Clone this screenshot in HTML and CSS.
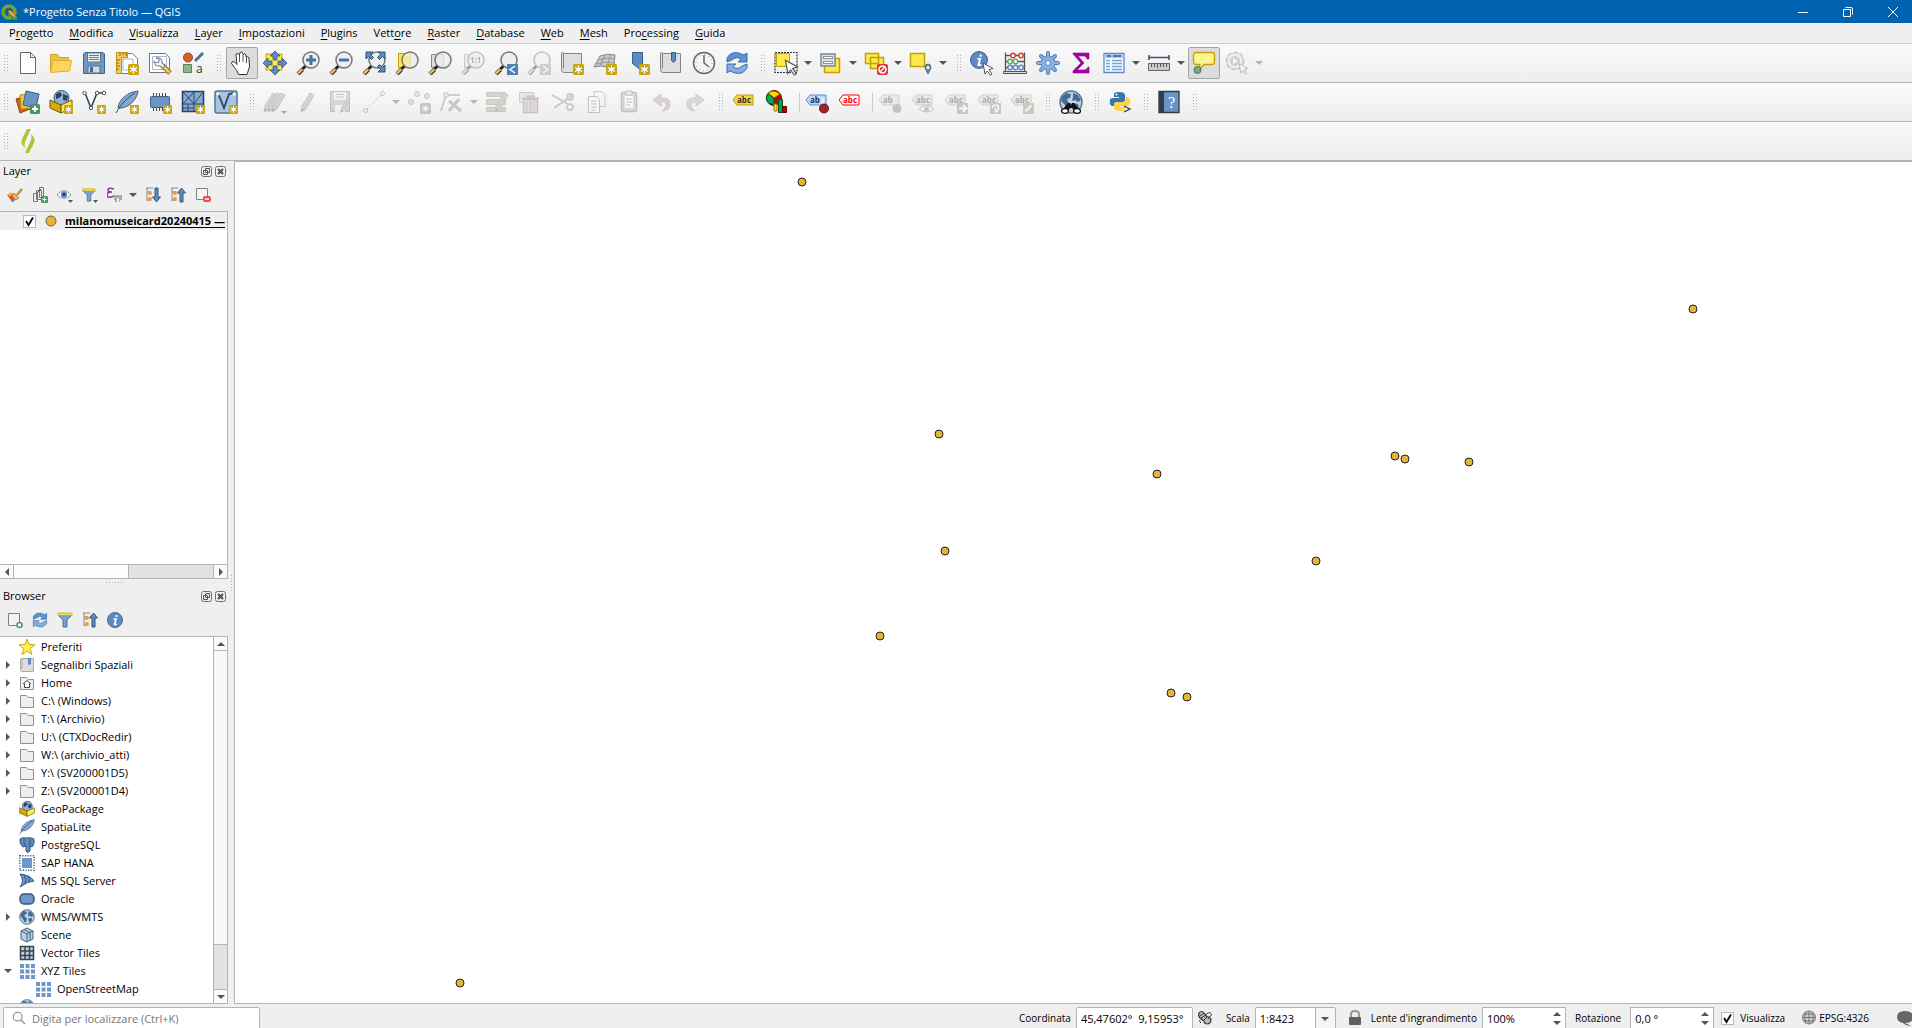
FILE: index.html
```html
<!DOCTYPE html>
<html lang="it">
<head>
<meta charset="utf-8">
<title>*Progetto Senza Titolo — QGIS</title>
<link rel="stylesheet" href="styles.css">
</head>
<body>
<svg class="sprite" aria-hidden="true">
  <symbol id="badge" viewBox="0 0 11 11"><rect width="11" height="11" rx="1.500" fill="#c9a512"/><path d="M5.500 1.500v8M2 3.500l7 4M9 3.500l-7 4" stroke="#fff" stroke-width="1.300"/><circle cx="5.500" cy="5.500" r="1.800" fill="#fff"/></symbol>
  <symbol id="pointer" viewBox="0 0 12 14"><path d="M1 1l10 5.500-4 1.300 3 4.200-1.700 1.200-3-4.200L3 12z" fill="#fff" stroke="#555"/></symbol>
  <symbol id="lens" viewBox="0 0 24 24"><path d="M2 23l4.500-4.500" stroke="#333" stroke-width="4"/><path d="M2 22.500l4-4" stroke="#f3c648" stroke-width="2.400"/><path d="M6.500 18l3.500-3.500" stroke="#222" stroke-width="3"/><circle cx="15" cy="9" r="8" fill="#eee" fill-opacity=".8" stroke="#777" stroke-width="1.500"/></symbol>
  <symbol id="pencil" viewBox="0 0 24 24"><path d="M5 22l1-6L14 3l4 2-8 14z" fill="#b5ad9f" stroke="#857c73"/><path d="M8 17l8-13" stroke="#958b82"/><path d="M5 22l1-4 3 2z" fill="#666"/></symbol>
  <symbol id="tag" viewBox="0 0 22 12"><path d="M1 6l4-5h16v10H5z"/></symbol>
  <symbol id="globe" viewBox="0 0 24 24"><circle cx="12" cy="12" r="11" fill="#bcd3ea" stroke="#5c7894" stroke-width="1.500"/><path d="M3 7l4-4 5 1-1 4-3 1 1 3 3 2-1 5-3 1-2-5-4-4zM14 3l5 2 3 5-3 2-3-2-3 1 1-4zM15 13l4 1 1 3-4 4-2-5z" fill="#466b91"/></symbol>
  <symbol id="folder" viewBox="0 0 16 16"><path d="M1.500 14.500v-12h6l2 2h5v10z" fill="#eee" stroke="#909090"/></symbol>
  <symbol id="box" viewBox="0 0 24 24"><circle cx="12.500" cy="8" r="7.500" fill="#8fb0d5" stroke="#35506e"/><path d="M7 4l4-2 2 3-3 3-3 1zM14 4l5 2-1 5-4-1z" fill="#29435f"/><path d="M1 10l11 5v8L1 18z" fill="#d6aa0a" stroke="#6f5909"/><path d="M23 10l-11 5v8l11-5z" fill="#fbe84d" stroke="#6f5909"/></symbol>
  <symbol id="feather" viewBox="0 0 24 24"><path d="M3 18C4 9 13 2 23 1c-1 8-8 16-17 17z" fill="#83a9d3" stroke="#42607f"/><path d="M1 23C6 14 12 8 20 3" fill="none" stroke="#2f4a68"/></symbol>
  <symbol id="refresh" viewBox="0 0 24 24"><path d="M2 11V7q4-7 12-5l5 2 3-2v9h-9l3-3q-5-3-9 1z" fill="#5b93d2" stroke="#3b6fa9"/><path d="M22 13v4q-4 7-12 5l-5-2-3 2v-9h9l-3 3q5 3 9-1z" fill="#7faee0" stroke="#3b6fa9"/></symbol>
  <symbol id="info" viewBox="0 0 16 16"><circle cx="8" cy="8" r="7.500" fill="#5b8ac4" stroke="#466c9b"/><path d="M9.500 3v2M6.500 7h2.500L7.500 12.500H10" fill="none" stroke="#fff" stroke-width="1.700"/></symbol>
  <symbol id="funnel" viewBox="0 0 16 16"><path d="M1 3h14L10 8v7H6V8z" fill="#7ba2cf" stroke="#4c719c"/><path d="M1 1h14v2.500H1z" fill="#fbe344" stroke="#c6a71b" stroke-width=".8"/></symbol>
  <symbol id="tree-up" viewBox="0 0 16 16"><path d="M1 1h7M2 1v13M2 5h3M2 13h3" stroke="#888"/><path d="M4 5h2v2H4zM4 11h2v2H4z" fill="#fff" stroke="#f0901e" stroke-width="1.300"/><path d="M11.500 1l4 5h-2.500v9h-3V6H7.500z" fill="#5b8ac4" stroke="#345779"/></symbol>
  <symbol id="tree-down" viewBox="0 0 16 16"><path d="M1 1h7M2 1v13M2 5h3M2 13h3" stroke="#888"/><path d="M4 5h2v2H4zM4 11h2v2H4z" fill="#fff" stroke="#f0901e" stroke-width="1.300"/><path d="M11.500 15l4-5h-2.500V1h-3v9H7.500z" fill="#5b8ac4" stroke="#345779"/></symbol>
  <symbol id="dots" viewBox="0 0 16 16"><path d="M1 1h4v4H1zM6.500 1h4v4h-4zM12 1h4v4h-4zM1 6.500h4v4H1zM6.500 6.500h4v4h-4zM12 6.500h4v4h-4zM1 12h4v4H1zM6.500 12h4v4h-4zM12 12h4v4h-4z" fill="#6c97c9"/></symbol>
  <symbol id="float" viewBox="0 0 11 11"><rect x=".5" y=".5" width="10" height="10" rx="2" fill="none" stroke="#707070"/><path d="M4.500 2.500h4v4h-4zM2.500 4.500h4v4h-4z" fill="#efefef" stroke="#555"/></symbol>
  <symbol id="close" viewBox="0 0 11 11"><rect x=".5" y=".5" width="10" height="10" rx="2" fill="none" stroke="#707070"/><path d="M3 3l5 5M8 3L3 8" stroke="#505050" stroke-width="2"/></symbol>
</svg>

<header class="titlebar">
  <svg class="logo" viewBox="0 0 16 16"><circle cx="8" cy="8" r="6" fill="none" stroke="#78a22f" stroke-width="3.600"/><path d="M8 8l3-1 5 6v3h-3L7 11z" fill="#589632"/><path d="M7 6l4 1 3 4-2 1-4-2z" fill="#ee7913"/><path d="M8 7l6 6" stroke="#f4d488"/></svg>
  <h1>*Progetto Senza Titolo — QGIS</h1>
  <div class="window-buttons">
    <button aria-label="Riduci"><svg viewBox="0 0 10 10"><path d="M0 5.500h10"/></svg></button>
    <button aria-label="Ripristina"><svg viewBox="0 0 10 10"><path d="M.5 2.500h7v7h-7zM2.500 .5h5.500q1.500 0 1.500 1.500v5.500" fill="none"/></svg></button>
    <button aria-label="Chiudi"><svg viewBox="0 0 10 10"><path d="M0 0l10 10M10 0L0 10"/></svg></button>
  </div>
</header>

<nav class="menubar">
  <button>P<u>r</u>ogetto</button><button><u>M</u>odifica</button><button><u>V</u>isualizza</button><button><u>L</u>ayer</button><button><u>I</u>mpostazioni</button><button><u>P</u>lugins</button><button>Vett<u>o</u>re</button><button><u>R</u>aster</button><button><u>D</u>atabase</button><button><u>W</u>eb</button><button><u>M</u>esh</button><button>Pro<u>c</u>essing</button><button><u>G</u>uida</button>
</nav>

<div class="toolbar">
  <div class="group"><i class="grip"></i>
    <button aria-label="Nuovo"><svg viewBox="0 0 24 24"><path d="M4.500 1.500h10l5 5v16h-15zM14.500 1.500v5h5" fill="#fff" stroke="#666"/></svg></button>
    <button aria-label="Apri"><svg viewBox="0 0 24 24"><path d="M1.500 21V3.500h7l2 3h9V10" fill="#eec04a" stroke="#d19f24"/><path d="M1.500 21.500L4 9.500h18.500L20.500 20z" fill="#fcd660" stroke="#dfae31"/></svg></button>
    <button aria-label="Salva"><svg viewBox="0 0 24 24"><path d="M3 1.500h18l1.500 1.500v19.500h-21V3z" fill="#6f97c5" stroke="#40658f"/><path d="M5.500 2h13v9h-13z" fill="#f1f1f1" stroke="#55789f"/><path d="M7 4.500h10M7 6.500h10M7 8.500h10" stroke="#777"/><path d="M6 15h12v7H6z" fill="#d8d8d8" stroke="#4c6c90"/><path d="M8 16h3v5H8z" fill="#456c98"/></svg></button>
    <button aria-label="Nuovo layout"><svg viewBox="0 0 24 24"><path d="M5.500 2.500h12l5 5v15h-17z" fill="#fff" stroke="#777"/><path d="M8 8h10v11H8z" fill="#fff" stroke="#9db7e0"/><path d="M1.500 1.500h11v5h-6v16h-5z" fill="#f5cc55" stroke="#bd901b"/><path d="M5 2v3M8 2v2M11 2v3M2 9h3M2 12h2M2 15h3M2 18h2" stroke="#7c6018"/><use href="#badge" x="13" y="13" width="11" height="11"/></svg></button>
    <button aria-label="Gestore layout"><svg viewBox="0 0 24 24"><path d="M1.500 2.500h16l4 4v15h-20z" fill="#fff" stroke="#777"/><path d="M4.500 5.500h14v13h-14z" fill="#fff" stroke="#9db7e0"/><path d="M14 14l8 8" stroke="#8b6b20" stroke-width="5"/><path d="M14.500 14.500l7 7" stroke="#e8c766" stroke-width="3"/><path d="M8 7l3 1v3l-3 1-2-2q0 6 6 5l3 2 2-2-3-3q1-6-6-5z" fill="#eee" stroke="#777"/></svg></button>
    <button aria-label="Gestore stili"><svg viewBox="0 0 24 24"><circle cx="7" cy="6.500" r="4.500" fill="#d3622c" stroke="#9b4419"/><path d="M14 10l8-8" stroke="#4c6f96" stroke-width="3"/><path d="M2.500 13.500h8v8h-8z" fill="#8db58b" stroke="#5b8159"/><text x="15" y="22" font-size="12" fill="#333">a</text></svg></button>
  </div>
  <div class="group"><i class="grip"></i>
    <button class="on" aria-label="Sposta mappa"><svg viewBox="0 0 24 24"><path d="M8.500 23.500q-1-4-4-7l-3-4q0-2 2-2 2 .5 3.500 3L6 4q.5-2 2-1.500L9.500 4 10 1.500q1.500-1 2.500 0l.5 2q1.500-1.500 3 .5v2q2-1 3 1l.5 9-2.500 7.500z" fill="#fff" stroke="#333"/><path d="M9.500 4v7M13 4v7M16.500 6v6" stroke="#555"/></svg></button>
    <button aria-label="Centra sulla selezione"><svg viewBox="0 0 24 24"><path d="M3 3h16v16H3z" fill="#fce94f" stroke="#c4a000"/><path d="M12 0l5 5h-3v4h-4V5H7zM12 24l5-5h-3v-4h-4v4H7zM0 12l5-5v3h4v4H5v3zM24 12l-5-5v3h-4v4h4v3z" fill="#5b8ac4" stroke="#335575" stroke-width=".8"/></svg></button>
    <button aria-label="Ingrandisci"><svg viewBox="0 0 24 24"><use href="#lens"/><path d="M15 4v10M10 9h10" stroke="#4373ab" stroke-width="3"/></svg></button>
    <button aria-label="Rimpicciolisci"><svg viewBox="0 0 24 24"><use href="#lens"/><path d="M10 9h10" stroke="#4373ab" stroke-width="3"/></svg></button>
    <button aria-label="Zoom completo"><svg viewBox="0 0 24 24"><use href="#lens"/><path d="M4 1h7L8.500 3.500l3 3-2 2-3-3L4 8zM23 1v7l-2.500-2.500-3 3-2-2 3-3L16 1zM23 21h-7l2.500-2.500-3-3 2-2 3 3L23 14z" fill="#5b8ac4" stroke="#335575"/></svg></button>
    <button aria-label="Zoom selezione"><svg viewBox="0 0 24 24"><path d="M3.500 2.500h12v14h-12z" fill="#fce94f" stroke="#c4a000"/><use href="#lens"/><path d="M9 5h6v10q-6-1-6-6z" fill="#fce94f" opacity=".4"/></svg></button>
    <button aria-label="Zoom layer"><svg viewBox="0 0 24 24"><path d="M3.500 3.500h12v13h-12z" fill="#ddd" stroke="#888"/><use href="#lens"/></svg></button>
    <button disabled aria-label="Risoluzione nativa"><svg viewBox="0 0 24 24"><path d="M3.500 3.500h12v13h-12z" fill="#ddd" stroke="#888"/><use href="#lens"/><text x="9" y="12" font-size="8" font-weight="700" fill="#555">1:1</text></svg></button>
    <button aria-label="Zoom precedente"><svg viewBox="0 0 24 24"><use href="#lens"/><path d="M13 13h11v11H13z" fill="#4f7fb8"/><path d="M21 15l-5 3.500 5 3.500" fill="none" stroke="#fff" stroke-width="1.500"/></svg></button>
    <button disabled aria-label="Zoom successivo"><svg viewBox="0 0 24 24"><use href="#lens"/><path d="M13 13h11v11H13z" fill="#999"/><path d="M16 15l5 3.500-5 3.500" fill="none" stroke="#fff" stroke-width="1.500"/></svg></button>
    <button aria-label="Nuova vista mappa"><svg viewBox="0 0 24 24"><path d="M3.500 2.500h18v19H4q-2.500 0-2.500-3v-16q0-1 1-1t1 1v15" fill="#dedede" stroke="#858585"/><use href="#badge" x="13" y="13" width="11" height="11"/></svg></button>
    <button aria-label="Nuova vista 3D"><svg viewBox="0 0 24 24"><path d="M1 16L7 5q8-3 15-1l-1 11-7 1q-6-2-13 0z" fill="#c9c9c9" stroke="#888"/><path d="M5 9q8-3 17-1M3 13q9-3 19-1M12 4L7 15M17 4l-3 12" fill="none" stroke="#999"/><use href="#badge" x="13" y="13" width="11" height="11"/></svg></button>
    <button aria-label="Nuovo segnalibro"><svg viewBox="0 0 24 24"><path d="M6.500 1.500h10v20l-5-5-5-4z" fill="#5b8ac4" stroke="#395b82"/><use href="#badge" x="13" y="13" width="11" height="11"/></svg></button>
    <button aria-label="Segnalibri"><svg viewBox="0 0 24 24"><path d="M3.500 2.500h18v19H4q-2.500 0-2.500-3v-16q0-1 1-1t1 1v15" fill="#dedede" stroke="#858585"/><path d="M12.500 1.500h4v8l-2 2-2-2z" fill="#5b8ac4" stroke="#395b82"/></svg></button>
    <button aria-label="Controllo temporale"><svg viewBox="0 0 24 24"><circle cx="12" cy="12" r="10.500" fill="#f5f5f5" stroke="#666" stroke-width="1.500"/><circle cx="12" cy="12" r="8" fill="none" stroke="#6792c4" stroke-dasharray="1 3.200"/><path d="M12 4v8l5 4" fill="none" stroke="#666" stroke-width="1.500"/></svg></button>
    <button aria-label="Aggiorna"><svg><use href="#refresh"/></svg></button>
  </div>
  <div class="group"><i class="grip"></i>
    <button class="menu" aria-label="Seleziona elementi"><svg viewBox="0 0 24 24"><path d="M1 1.500h22v20H1z" fill="none" stroke="#333" stroke-width="1.200" stroke-dasharray="2 1"/><path d="M2.500 2.500h13v13h-13z" fill="#fce94f" stroke="#c4a000"/><use href="#pointer" x="10" y="8" width="15" height="17"/></svg></button>
    <button class="menu" aria-label="Seleziona per valore"><svg viewBox="0 0 24 24"><path d="M5.500 7.500h15v14h-15z" fill="#fce94f" stroke="#c4a000" stroke-width="1.500"/><path d="M2 3h14v12H2z" fill="#dfe2e6" stroke="#7e8790" stroke-width="1.500"/><path d="M4 6.500h10M4 11.500h10" stroke="#8893a2" stroke-width="3"/><path d="M5 6.500h8M5 11.500h8" stroke="#fff"/></svg></button>
    <button class="menu" aria-label="Deseleziona"><svg viewBox="0 0 24 24"><path d="M1.500 2.500h13v10h-13zM6.500 6.500h13v11h-13z" fill="#fce94f" stroke="#c4a000" stroke-width="1.500"/><rect x="13" y="13" width="11" height="11" rx="2" fill="#d9383d"/><circle cx="18.500" cy="18.500" r="3.500" fill="none" stroke="#fff" stroke-width="1.500"/><path d="M16 21l5-5" stroke="#fff" stroke-width="1.500"/></svg></button>
    <button class="menu" aria-label="Seleziona per posizione"><svg viewBox="0 0 24 24"><path d="M1.500 2.500h14v13h-14z" fill="#fce94f" stroke="#c4a000" stroke-width="1.500"/><path d="M19 23l-3-6q0-4 3-4t3 4z" fill="#6b8ba3" stroke="#48687e"/><circle cx="19" cy="16.500" r="1.500" fill="#fff"/></svg></button>
  </div>
  <div class="group"><i class="grip"></i>
    <button aria-label="Informazioni elementi"><svg viewBox="0 0 24 24"><use href="#info" width="18" height="18"/><use href="#pointer" x="12" y="11" width="12" height="14"/></svg></button>
    <button aria-label="Calcolatore di campi"><svg viewBox="0 0 24 24"><path d="M2.500 1.500v19M21.500 1.500v19M2 4.500h20M2 10.500h20M2 16.500h20" stroke="#555" stroke-width="1.300"/><path d="M.5 20.500h23v2H.5z" fill="#ddd" stroke="#555"/><g fill="#fff" stroke-width="1.400"><g stroke="#d53b3b"><circle cx="10" cy="4.500" r="2.200"/><circle cx="18" cy="4.500" r="2.200"/></g><g stroke="#55b455"><circle cx="7" cy="10.500" r="2.200"/><circle cx="12.500" cy="10.500" r="2.200"/></g><g stroke="#5388c4"><circle cx="7" cy="16.500" r="2.200"/><circle cx="12.500" cy="16.500" r="2.200"/><circle cx="18" cy="16.500" r="2.200"/></g></g></svg></button>
    <button aria-label="Strumenti di Processing"><svg viewBox="0 0 24 24"><path d="M12 2v20M2 12h20M5 5l14 14M19 5L5 19" stroke="#4d80c0" stroke-width="4" stroke-linecap="round"/><circle cx="12" cy="12" r="7" fill="#8cb0de" stroke="#4d80c0"/><path d="M12 2v20M2 12h20M5 5l14 14M19 5L5 19" stroke="#8cb0de" stroke-width="2" stroke-linecap="round"/><circle cx="12" cy="12" r="2.500" fill="#fff" stroke="#4d80c0"/></svg></button>
    <button aria-label="Riepilogo statistico"><svg viewBox="0 0 24 24"><path d="M4 2h16v6h-2q-.5-3-3-3H9l6 7-7 7h7q3 0 4-3h1v6H4v-2l8-8-8-9z" fill="#a800a8" stroke="#840084" stroke-width=".6"/></svg></button>
    <button class="menu" aria-label="Tabella attributi"><svg viewBox="0 0 24 24"><path d="M2 2.500h20v19H2z" fill="#f7fbff" stroke="#5b8ac4" stroke-width="1.300"/><path d="M2.500 3h19v4h-19z" fill="#a9c8ea"/><path d="M5 5h4M11 5h8" stroke="#4c79ae" stroke-width="2"/><path d="M4 9.500h4M10 9.500h10M4 12.500h4M10 12.500h10M4 15.500h4M10 15.500h10M4 18.500h4M10 18.500h10" stroke="#7aa1cf" stroke-width="1.300"/></svg></button>
    <button class="menu" aria-label="Misura linea"><svg viewBox="0 0 24 24"><path d="M2 6.500h20M2 4v5M22 4v5" stroke="#34597f" stroke-width="1.600"/><path d="M1.500 12.500h21v7h-21z" fill="#ccc" stroke="#666"/><path d="M4.500 13v3M7.500 13v3M10.500 13v4M13.500 13v3M16.500 13v3M19.500 13v3" stroke="#555"/></svg></button>
    <button class="on" aria-label="Suggerimenti mappa"><svg viewBox="0 0 24 24"><path d="M5 1.500h15q2.500 0 2.500 2.500v7q0 2.500-2.500 2.500h-8l-5 6 1-6H4q-2.500 0-2.500-2.500V4q0-2.500 2.500-2.500z" fill="#fdf48f" stroke="#c4a000" stroke-width="1.300"/><circle cx="5.500" cy="19" r="3.500" fill="#7eac80" stroke="#4f7352"/></svg></button>
    <button class="menu" disabled aria-label="Esegui azione"><svg viewBox="0 0 24 24"><circle cx="10" cy="10" r="8" fill="#ddd" stroke="#888" stroke-width="3" stroke-dasharray="4 2"/><circle cx="10" cy="10" r="8" fill="#e8e8e8" stroke="#999"/><circle cx="10" cy="10" r="5" fill="#999"/><path d="M8 7l5 3-5 3z" fill="#fff"/><use href="#pointer" x="13" y="12" width="11" height="12"/></svg></button>
  </div>
</div>

<div class="toolbar">
  <div class="group"><i class="grip"></i>
    <button aria-label="Gestore sorgenti dati"><svg viewBox="0 0 24 24"><path d="M0 9l10-3 4 13-10 4z" fill="#d65a25" stroke="#9b3f16"/><path d="M4 5l11-1 1 14-11 1z" fill="#f2ca35" stroke="#b28a0d"/><path d="M10 1l13 3-3 14-13-3z" fill="#6b94c4" stroke="#3d618b"/><rect x="14" y="14" width="10" height="10" rx="1.500" fill="#4f9164"/><path d="M19 16v6M16 19h6" stroke="#fff" stroke-width="1.800"/></svg></button>
    <button aria-label="Nuovo GeoPackage"><svg viewBox="0 0 24 24"><use href="#box"/><use href="#badge" x="15" y="15" width="9" height="9"/></svg></button>
    <button aria-label="Nuovo shapefile"><svg viewBox="0 0 24 24"><path d="M3 3l6 15 6-15h7" fill="none" stroke="#34495f" stroke-width="1.600"/><g fill="#fff" stroke="#555"><circle cx="2.500" cy="3" r="1.700"/><circle cx="9" cy="18" r="1.700"/><circle cx="15" cy="3" r="1.700"/><circle cx="22" cy="3" r="1.700"/></g><use href="#badge" x="15" y="15" width="9" height="9"/></svg></button>
    <button aria-label="Nuovo SpatiaLite"><svg viewBox="0 0 24 24"><use href="#feather"/><use href="#badge" x="15" y="15" width="9" height="9"/></svg></button>
    <button aria-label="Nuovo layer temporaneo"><svg viewBox="0 0 24 24"><path d="M5.500 3v18M8.500 3v18M11.500 3v18M14.500 3v18M17.500 3v18" stroke="#444"/><rect x="2.500" y="6.500" width="19" height="11" rx="1" fill="#6b94c4" stroke="#3d618b"/><use href="#badge" x="15" y="15" width="9" height="9"/></svg></button>
    <button aria-label="Nuova mesh"><svg viewBox="0 0 24 24"><path d="M1.500 1.500h21v20h-21z" fill="#83a9d3" stroke="#2c4562" stroke-width="1.600"/><path d="M1.500 14h21M13 1.500v20M2 2l11 12M2 14L13 2M13 14l9-12M2 18h11M7 14v8" fill="none" stroke="#2c4562"/><use href="#badge" x="15" y="15" width="9" height="9"/></svg></button>
    <button aria-label="Nuovo layer GPX"><svg viewBox="0 0 24 24"><rect x="1" y="1" width="22" height="22" rx="2" fill="#a9c4e2" stroke="#577390" stroke-width="1.500"/><path d="M4 3l6 15 5-14 5-1" fill="none" stroke="#2c4562" stroke-width="1.800"/><circle cx="4" cy="4" r="1.500" fill="#fff"/><circle cx="20" cy="4" r="1.500" fill="#fff"/><use href="#badge" x="15" y="15" width="9" height="9"/></svg></button>
  </div>
  <div class="group"><i class="grip"></i>
    <button disabled aria-label="Modifiche in corso"><svg viewBox="0 0 24 24"><use href="#pencil" x="-4"/><use href="#pencil"/><use href="#pencil" x="4"/><path d="M18 21h6l-3 3z" fill="#333"/></svg></button>
    <button disabled aria-label="Attiva modifica"><svg><use href="#pencil"/></svg></button>
    <button disabled aria-label="Salva modifiche"><svg viewBox="0 0 24 24"><path d="M1.500 1.500h19v20h-19z" fill="#aaa" stroke="#777"/><path d="M5 2h12v8H5zM6 15h10v7H6z" fill="#eee"/><path d="M7 4.500h8M7 7h8" stroke="#888"/><use href="#pencil" x="8" y="7" width="17" height="17"/></svg></button>
    <button class="menu" disabled aria-label="Digitalizza"><svg viewBox="0 0 24 24"><path d="M4 20L20 4" stroke="#888" stroke-dasharray="3 1.500"/><g fill="#eee" stroke="#777"><circle cx="3.500" cy="20.500" r="2"/><circle cx="20.500" cy="3.500" r="2"/></g></svg></button>
    <button disabled aria-label="Aggiungi punto"><svg viewBox="0 0 24 24"><g fill="#ccc" stroke="#777"><circle cx="4" cy="12" r="2.500"/><circle cx="10" cy="4" r="2.500"/><circle cx="20" cy="6" r="2.500"/></g><rect x="13" y="13" width="11" height="11" rx="1.500" fill="#8b8468"/><path d="M18.500 15v7M15 18.500h7M16 16l5 5M21 16l-5 5" stroke="#fff"/></svg></button>
    <button class="menu" disabled aria-label="Strumento vertici"><svg viewBox="0 0 24 24"><path d="M1 21L6 5h14" fill="none" stroke="#777" stroke-width="1.500"/><path d="M4 3h4v4H4z" fill="#eee" stroke="#777"/><path d="M9 11l12 10M19 9L9 21" stroke="#888" stroke-width="3"/></svg></button>
    <button disabled aria-label="Modifica attributi"><svg viewBox="0 0 24 24"><path d="M1.500 2.500h19v4h-19zM1.500 9.500h19v5h-19zM1.500 17.500h19v4h-19z" fill="#a9a98c" stroke="#8a8a77"/><use href="#pencil" x="5"/></svg></button>
    <button disabled aria-label="Elimina"><svg viewBox="0 0 24 24"><path d="M1.500 2.500h14v10h-14z" fill="#d8d4b4" stroke="#98907b"/><path d="M5.500 9.500h14v13h-14zM4 8h17M9 8V6h7v2" fill="#d0b5b5" stroke="#977a7a" stroke-width="1.400"/><path d="M9 12v8M12.500 12v8M16 12v8" stroke="#977a7a"/></svg></button>
    <button disabled aria-label="Taglia"><svg viewBox="0 0 24 24"><path d="M1 5l16 9M3 18L22 5" stroke="#888" stroke-width="2"/><circle cx="19" cy="17" r="3" fill="none" stroke="#a88" stroke-width="1.800"/><circle cx="19" cy="7" r="3" fill="none" stroke="#a88" stroke-width="1.800"/></svg></button>
    <button disabled aria-label="Copia"><svg viewBox="0 0 24 24"><path d="M10 1.500h8l3 3v12h-11z" fill="#f4f4f4" stroke="#888"/><path d="M4.500 6.500h8l3 3v13h-11zM7 11h6M7 14h6M7 17h6M7 20h4" fill="#fff" stroke="#777"/></svg></button>
    <button disabled aria-label="Incolla"><svg viewBox="0 0 24 24"><rect x="4.500" y="2.500" width="15" height="19" rx="1.500" fill="#c0c0b8" stroke="#777" stroke-width="1.500"/><path d="M7 5h10v14H7z" fill="#fff" stroke="#888"/><path d="M9 1h6v4H9zM9 9h6M9 12h6M9 15h4" fill="#ddd" stroke="#777"/></svg></button>
    <button disabled aria-label="Annulla"><svg viewBox="0 0 24 24"><path d="M11 4L3 10l8 6v-4q6-1 5 4-1 3-4 5 9-1 8-8-1-6-9-5z" fill="#b5a094" stroke="#9c8a80"/></svg></button>
    <button disabled aria-label="Ripristina modifica"><svg viewBox="0 0 24 24"><path d="M13 4l8 6-8 6v-4q-6-1-5 4 1 3 4 5-9-1-8-8 1-6 9-5z" fill="#a9b5a6" stroke="#818d7e"/></svg></button>
  </div>
  <div class="group"><i class="grip"></i>
    <button aria-label="Etichette layer"><svg class="yellow" viewBox="0 0 24 24"><use href="#tag" y="4" width="22" height="12"/><text x="5" y="13">abc</text></svg></button>
    <button aria-label="Diagrammi layer"><svg viewBox="0 0 24 24"><circle cx="9" cy="8" r="7.500" fill="#c00000" stroke="#640000"/><path d="M9 8L3 3.500Q8-1.500 15 4z" fill="#ffd700" stroke="#8a6d00"/><path d="M9 8L3 3.500Q-1 9 4 13.500l5 1z" fill="#00a651" stroke="#00532a"/><path d="M9 14h3v7H9z" fill="#ffd23c" stroke="#a67a00"/><path d="M13.500 9.500h4v13h-4z" fill="#00a651" stroke="#00532a"/><path d="M17.500 16.500h4v6h-4z" fill="#c00000" stroke="#640000"/></svg></button>
    <i class="rule"></i>
    <button aria-label="Fissa etichette"><svg class="blue" viewBox="0 0 24 24"><use href="#tag" y="4" width="22" height="12"/><text x="5" y="13">ab</text><path d="M18 8v9" stroke="#eee" stroke-width="3"/><circle cx="19" cy="18.500" r="4.500" fill="#a81f24" stroke="#6f1115"/></svg></button>
    <button aria-label="Etichette non posizionate"><svg class="red" viewBox="0 0 24 24"><use href="#tag" y="4" width="22" height="12"/><text x="5" y="13">abc</text></svg></button>
    <i class="rule"></i>
    <button disabled aria-label="Fissa"><svg class="gray" viewBox="0 0 24 24"><use href="#tag" y="4" width="22" height="12"/><text x="5" y="13">ab</text><path d="M18 8v9" stroke="#ddd" stroke-width="3"/><circle cx="19" cy="18.500" r="4.500" fill="#977"/></svg></button>
    <button disabled aria-label="Mostra o nascondi"><svg class="gray" viewBox="0 0 24 24"><use href="#tag" y="4" width="22" height="12"/><text x="5" y="13">abc</text><path d="M8 19q7-7 15 0-7 6-15 0z" fill="#fff" stroke="#777"/><circle cx="15.500" cy="19" r="2.500" fill="#888"/></svg></button>
    <button disabled aria-label="Sposta etichetta"><svg class="gray" viewBox="0 0 24 24"><use href="#tag" y="4" width="22" height="12"/><text x="5" y="13">abc</text><path d="M13 13h11v11H13z" fill="#888"/><path d="M15 18.500h7M19 15l3.500 3.500L19 22" fill="none" stroke="#fff" stroke-width="2"/></svg></button>
    <button disabled aria-label="Ruota etichetta"><svg class="gray" viewBox="0 0 24 24"><use href="#tag" y="4" width="22" height="12"/><text x="5" y="13">abc</text><path d="M13 13h11v11H13z" fill="#888"/><path d="M15.500 18q0-3 3-3t3 3-3 4v-4" fill="none" stroke="#fff" stroke-width="1.500"/></svg></button>
    <button disabled aria-label="Modifica etichetta"><svg class="gray" viewBox="0 0 24 24"><use href="#tag" y="4" width="22" height="12"/><text x="5" y="13">abc</text><path d="M13 13h11v11H13z" fill="#968f70"/><path d="M15.500 21.500l6-6" stroke="#fff" stroke-width="2"/></svg></button>
  </div>
  <div class="group"><i class="grip"></i>
    <button aria-label="MetaSearch"><svg viewBox="0 0 24 24"><use href="#globe"/><path d="M4 19l5-6h2l1 2 1-2h2l5 6-4 2-3-3h-2l-3 3z" fill="#111"/><ellipse cx="6" cy="21" rx="3.500" ry="2.300" fill="#fff" stroke="#111" stroke-width="1.300"/><ellipse cx="18" cy="21" rx="3.500" ry="2.300" fill="#fff" stroke="#111" stroke-width="1.300"/></svg></button>
  </div>
  <div class="group"><i class="grip"></i>
    <button aria-label="Console Python"><svg viewBox="0 0 24 24"><path d="M11 2q6 0 6 3v5q0 2-3 2H9q-3 0-3 4H4q-3-1-2-6 0-2 3-2h6V7H6V4q0-2 5-2z" fill="#3a76a8"/><path d="M12 21q-6 0-6-3v-4q0-2 3-2h5q4 0 4-5h2q3 1 2 6 0 3-4 3h-6v1h5v2q0 2-5 2z" fill="#ffd343"/><circle cx="8.500" cy="4.500" r="1" fill="#fff"/><path d="M16 16l6 3-6 3" fill="none" stroke="#333" stroke-width="1.300"/></svg></button>
  </div>
  <div class="group"><i class="grip"></i>
    <button aria-label="Guida in linea"><svg viewBox="0 0 24 24"><path d="M2 1.500h20v21H2z" fill="#6b94c4" stroke="#2d3a47" stroke-width="1.300"/><path d="M2 2h5v20H2z" fill="#2c3e50"/><text class="serif" x="11" y="18" font-size="16" fill="#fff">?</text></svg></button>
  </div>
  <div class="group"><i class="grip"></i></div>
</div>

<div class="toolbar">
  <div class="group"><i class="grip"></i>
    <button aria-label="Plugin"><svg viewBox="0 0 24 24"><path d="M11 0h4L9 13q-1 3 0 6-5-4-3-9zM13 24H9l6-13q1-3 0-6 5 4 3 9z" fill="#b1c434"/></svg></button>
  </div>
</div>

<main class="workspace">
  <aside class="docks">
    <section class="dock layers">
      <header><h2>Layer</h2><button aria-label="Sgancia Layer"><svg><use href="#float"/></svg></button><button aria-label="Chiudi Layer"><svg><use href="#close"/></svg></button></header>
      <div class="dock-tools">
        <button aria-label="Stile layer"><svg viewBox="0 0 16 16"><path d="M0 8l5-2 4 4-4 5-2-3z" fill="#e84d32"/><path d="M2 5l4 1-4 4z" fill="#f6c82a"/><path d="M4 14l5-5 2 2-5 4z" fill="#4c8fd0"/><path d="M7 6l5 5-3 2-4-4z" fill="#f0b85d" stroke="#bc8339"/><path d="M10 8l5-6" stroke="#c98c43" stroke-width="2.500"/></svg></button>
        <button aria-label="Aggiungi gruppo"><svg viewBox="0 0 16 16"><path d="M1.500 6.500h4v8h-4zM4.500 3.500h5v9h-5zM7.500 .5h4v10h-4z" fill="#eee" stroke="#777"/><path d="M4 7L9 2" stroke="#555"/><rect x="9" y="9" width="7" height="7" rx="1" fill="#529665"/><path d="M12.500 10.500v4M10.500 12.500h4" stroke="#fff"/></svg></button>
        <button aria-label="Temi mappa"><svg viewBox="0 0 16 16"><path d="M0 8q7-9 14 0-7 7-14 0z" fill="#fff" stroke="#999"/><circle cx="7" cy="7.500" r="3.200" fill="#5b8ac4"/><circle cx="7" cy="7.500" r="1.300" fill="#222"/><path d="M11 13h5l-2.500 3z" fill="#555"/></svg></button>
        <button aria-label="Filtra legenda"><svg viewBox="0 0 16 16"><use href="#funnel" width="14" height="16"/><path d="M11 13h5l-2.500 3z" fill="#555"/></svg></button>
        <button class="menu" aria-label="Filtra per espressione"><svg viewBox="0 0 16 16"><path d="M7 2Q1 0 1 3q0 2 4 2-5 0-5 3 0 4 7 1" fill="none" stroke="#814292" stroke-width="1.600"/><path d="M7 8h8v5h-2v2h-1v-4h-2v4H8v-2H7z" fill="#aaa"/></svg></button>
        <button aria-label="Espandi tutto"><svg><use href="#tree-down"/></svg></button>
        <button aria-label="Comprimi tutto"><svg><use href="#tree-up"/></svg></button>
        <button aria-label="Rimuovi layer"><svg viewBox="0 0 16 16"><path d="M1.500 1.500h11v11h-11z" fill="#f3f3f3" stroke="#808080"/><rect x="8" y="9" width="8" height="6" rx="2" fill="#ed4b55"/><path d="M10 12h4" stroke="#fff" stroke-width="1.500"/></svg></button>
      </div>
      <div class="tree-frame">
        <label class="layer-row"><input type="checkbox" checked><svg viewBox="0 0 12 12"><circle cx="6" cy="6" r="5" fill="#e5b636" stroke="#6d6044"/></svg><span>milanomuseicard20240415 —</span></label>
        <div class="scroll-x"><button aria-label="Scorri a sinistra"><i class="tri left"></i></button><div class="track"><i class="thumb"></i></div><button aria-label="Scorri a destra"><i class="tri right"></i></button></div>
      </div>
    </section>
    <i class="split-h"></i>
    <section class="dock browser">
      <header><h2>Browser</h2><button aria-label="Sgancia Browser"><svg><use href="#float"/></svg></button><button aria-label="Chiudi Browser"><svg><use href="#close"/></svg></button></header>
      <div class="dock-tools">
        <button aria-label="Aggiungi layer"><svg viewBox="0 0 16 16"><path d="M1.500 1.500h11v12h-11z" fill="#f3f3f3" stroke="#808080"/><circle cx="12.500" cy="13" r="2.500" fill="#fff" stroke="#529665" stroke-width="1.600"/></svg></button>
        <button aria-label="Aggiorna browser"><svg><use href="#refresh"/></svg></button>
        <button aria-label="Filtra browser"><svg><use href="#funnel"/></svg></button>
        <button aria-label="Comprimi browser"><svg><use href="#tree-up"/></svg></button>
        <button aria-label="Proprietà"><svg><use href="#info"/></svg></button>
      </div>
      <div class="browser-frame">
        <ul class="tree">
          <li><svg viewBox="0 0 16 16"><path d="M8 0l2 5.500 6 .3-4.700 3.700L13 15.500 8 12l-5 3.500 1.700-6L0 5.800l6-.3z" fill="#fdf04f" stroke="#cfa71b"/></svg>Preferiti</li>
          <li class="shut"><svg viewBox="0 0 16 16"><path d="M3 1.500h11.500v13H3Q1.500 14 1.500 12V2q1-1 1.500 0v10" fill="#ddd" stroke="#aaa"/><path d="M9 1h3v6l-1.500 1L9 7z" fill="#5b8ac4"/></svg>Segnalibri Spaziali</li>
          <li class="shut"><svg viewBox="0 0 16 16"><use href="#folder"/><path d="M4 9l4-3.500L12 9M5.500 8.500v4h5v-4" fill="#fff" stroke="#444"/></svg>Home</li>
          <li class="shut"><svg><use href="#folder"/></svg>C:\ (Windows)</li>
          <li class="shut"><svg><use href="#folder"/></svg>T:\ (Archivio)</li>
          <li class="shut"><svg><use href="#folder"/></svg>U:\ (CTXDocRedir)</li>
          <li class="shut"><svg><use href="#folder"/></svg>W:\ (archivio_atti)</li>
          <li class="shut"><svg><use href="#folder"/></svg>Y:\ (SV200001D5)</li>
          <li class="shut"><svg><use href="#folder"/></svg>Z:\ (SV200001D4)</li>
          <li><svg><use href="#box"/></svg>GeoPackage</li>
          <li><svg><use href="#feather"/></svg>SpatiaLite</li>
          <li><svg viewBox="0 0 16 16"><path d="M1 2q3-2 6-1 5-1 8 1 1 5-2 8l-2-1v5q-3 3-4 0V9L4 10Q0 7 1 2z" fill="#5f8cbf" stroke="#33567e"/><path d="M5 2v5l2 2M11 2v4l-1 3" fill="none" stroke="#33567e"/></svg>PostgreSQL</li>
          <li><svg viewBox="0 0 16 16"><path d="M3 3h10v10H3z" fill="#6c97c9"/><path d="M.8.8h14.400v14.400H.8z" fill="none" stroke="#33567e" stroke-width="1.400" stroke-dasharray="1.200 1.400"/></svg>SAP HANA</li>
          <li><svg viewBox="0 0 16 16"><path d="M1 1q10 1 14 7-6 0-14 6 5-6 0-13z" fill="#6c97c9" stroke="#33567e"/><path d="M5 2q3 5 1 9M9 3q2 4 1 6" fill="none" stroke="#33567e"/></svg>MS SQL Server</li>
          <li><svg viewBox="0 0 16 16"><rect x="1" y="3" width="14" height="10" rx="4" fill="#6c97c9" stroke="#33567e" stroke-width="1.500"/></svg>Oracle</li>
          <li class="shut"><svg><use href="#globe"/></svg>WMS/WMTS</li>
          <li><svg viewBox="0 0 16 16"><path d="M8 1l6 3v8l-6 3-6-3V4z" fill="#b9d0e8" stroke="#45617f"/><path d="M2 4l6 3 6-3M8 7v8M5 2.500l6 3v8" fill="none" stroke="#45617f"/></svg>Scene</li>
          <li><svg viewBox="0 0 16 16"><path d="M1.500 1.500h13v13h-13z" fill="#bdd0e6" stroke="#3a444e" stroke-width="1.500"/><path d="M6 1v14M10.500 1v14M1 6h14M1 10.500h14" stroke="#3a444e" stroke-width="1.500"/></svg>Vector Tiles</li>
          <li class="open"><svg><use href="#dots"/></svg>XYZ Tiles</li>
          <li class="child"><svg><use href="#dots"/></svg>OpenStreetMap</li>
          <li><svg><use href="#globe"/></svg>WCS</li>
        </ul>
        <div class="scroll-y"><button aria-label="Scorri su"><i class="tri up"></i></button><div class="track"><i class="thumb"></i></div><button aria-label="Scorri giù"><i class="tri down"></i></button></div>
      </div>
    </section>
  </aside>
  <i class="split-v"></i>
  <section class="map" aria-label="Mappa">
    <svg>
      <g class="points"><circle cx="567" cy="20" r="4"/><circle cx="1458" cy="147" r="4"/><circle cx="704" cy="272" r="4"/><circle cx="922" cy="312" r="4"/><circle cx="1160" cy="294" r="4"/><circle cx="1170" cy="297" r="4"/><circle cx="1234" cy="300" r="4"/><circle cx="710" cy="389" r="4"/><circle cx="1081" cy="399" r="4"/><circle cx="645" cy="474" r="4"/><circle cx="936" cy="531" r="4"/><circle cx="952" cy="535" r="4"/><circle cx="225" cy="821" r="4"/></g>
    </svg>
  </section>
</main>

<footer class="statusbar">
  <div class="locator"><svg viewBox="0 0 16 16"><circle cx="6.500" cy="6.500" r="5" fill="none" stroke="#888" stroke-width="1.200"/><path d="M10 10l5 5" stroke="#888" stroke-width="1.500"/></svg><input type="text" aria-label="Localizza" placeholder="Digita per localizzare (Ctrl+K)"></div>
  <div class="field"><label for="coord">Coordinata</label><input id="coord" class="coord" value="45,47602°  9,15953°"></div>
  <button class="flat" aria-label="Estensione mouse"><svg viewBox="0 0 16 16"><path d="M2 3q3-3 5 0l3 4q2-1 4 2 0 4-3 5-4 0-4-3L3 8q-2-2-1-5z" fill="#bbb" stroke="#333" stroke-width="1.200"/><path d="M3 6l4-3M4 8l5-3M6 11l4-4M9 6q0-4 5-3M11 9l4-5M4 13q-2-1-1-3" fill="none" stroke="#333"/></svg></button>
  <div class="field"><label for="scale">Scala</label><select id="scale"><option>1:8423</option></select></div>
  <button class="flat lock" aria-label="Blocca scala"><svg viewBox="0 0 16 16"><path d="M4 8V4q0-3 4-3t4 3v4" fill="none" stroke="#999" stroke-width="2"/><rect x="2" y="7" width="12" height="8" rx="1" fill="#606060"/></svg></button>
  <div class="field"><label for="zoom">Lente d'ingrandimento</label><div class="spin"><input id="zoom" value="100%"><button aria-label="Aumenta lente"><i class="tri up"></i></button><button aria-label="Riduci lente"><i class="tri down"></i></button></div></div>
  <div class="field rotation"><label for="rot">Rotazione</label><div class="spin"><input id="rot" value="0,0 °"><button aria-label="Aumenta rotazione"><i class="tri up"></i></button><button aria-label="Riduci rotazione"><i class="tri down"></i></button></div></div>
  <label class="render"><input type="checkbox" checked>Visualizza</label>
  <button class="flat crs"><svg viewBox="0 0 16 16"><circle cx="8" cy="7.500" r="6.500" fill="#ccc" stroke="#777"/><path d="M8 1v13M1.500 7.500h13M3 4h10M3 11h10M5 2q-3 5.500 0 11M11 2q3 5.500 0 11" fill="none" stroke="#777"/></svg>EPSG:4326</button>
  <button class="flat bubble" aria-label="Messaggi"><svg viewBox="0 0 18 16"><path d="M9 1q8 0 8 6t-8 6l6 3q-5 0-8-3-6-1-6-6 0-6 8-6z" fill="#666"/></svg></button>
</footer>
</body>
</html>
```

FILE: styles.css
```css
* { box-sizing: border-box; }

:root {
  --panel: #efefef;
  --line: #b4b4b4;
  --dark: #555;
  --dot: conic-gradient(from 270deg at 1px 1px, #b0b0b0 90deg, transparent 0);
}

body {
  margin: 0;
  height: 100vh;
  display: flex;
  flex-direction: column;
  overflow: hidden;
  background: var(--panel);
  color: #000;
  font: 11px/18px "Open Sans", "Noto Sans", sans-serif;
}

button, input, select { font: inherit; color: inherit; }
button { padding: 0; border: 0; background: none; }
h1, h2 { margin: 0; font-size: 11px; font-weight: 400; }
.sprite { position: absolute; width: 0; height: 0; }

.titlebar {
  flex: none;
  height: 23px;
  display: flex;
  align-items: center;
  padding-left: 1px;
  background: #0063b1;
  color: #fff;
}
.logo { width: 16px; height: 16px; margin-right: 6px; }
.window-buttons { margin-left: auto; display: flex; gap: 7px; }
.window-buttons button { width: 38px; height: 20px; }
.window-buttons svg { width: 10px; height: 10px; stroke: #fff; display: block; margin: auto; }

.menubar {
  flex: none;
  height: 21px;
  display: flex;
  gap: 16px;
  padding-left: 9px;
  border-bottom: 1px solid #d0d0d0;
}
.menubar button { height: 20px; }
u { text-underline-offset: 2px; }

.toolbar {
  flex: none;
  height: 39px;
  display: flex;
  background: linear-gradient(#fafafa, #ededed);
  border-bottom: 1px solid var(--line);
}
.group { display: flex; align-items: center; gap: 1px; }
.grip {
  width: 16px;
  height: 16px;
  padding: 0 4px 0 8px;
  background: var(--dot) content-box left top / 3px 3px;
  background-origin: content-box;
}
.group:first-child .grip { width: 11px; padding: 0 3px 0 4px; }
.group button {
  width: 32px;
  height: 32px;
  display: flex;
  align-items: center;
  padding: 0 4px;
}
.group svg { flex: none; width: 24px; height: 24px; overflow: visible; }
.group .menu { width: 44px; }
.menu::after {
  content: "";
  margin-left: 6px;
  border: 4px solid transparent;
  border-top-color: var(--dark);
  border-bottom: 0;
}
.group button:disabled { opacity: .4; filter: grayscale(.4); }
.group .on { background: #dcdcdc; border: 1px solid #a5a5a5; border-radius: 2px; padding: 0 3px; }
.rule { width: 6px; height: 19px; border-right: 1px solid #ccc; }
.toolbar text { font-family: "Open Sans", sans-serif; }
.toolbar .serif { font-family: "Liberation Serif", serif; }
.yellow text, .blue text, .red text, .gray text { font-size: 8px; font-weight: 700; fill: #333; }
.yellow use { fill: #f4d934; stroke: #bd9b09; }
.blue use { fill: #b9d9ff; stroke: #4b90e2; }
.red use { fill: #fff; stroke: #f00; }
.red text { fill: #f00; }
.gray use { fill: #d8d8c4; stroke: #999; }

.workspace { flex: 1; min-height: 0; display: flex; }
.docks { width: 228px; display: flex; flex-direction: column; }
.dock { display: flex; flex-direction: column; min-height: 0; }
.layers { flex: 0 0 418px; }
.browser { flex: 1; }
.dock header { flex: none; height: 20px; display: flex; align-items: center; gap: 3px; padding: 0 2px 0 3px; }
.dock h2 { flex: 1; }
.dock header button, .dock header svg { width: 11px; height: 11px; display: block; }
.dock-tools { flex: none; height: 28px; margin-bottom: 2px; display: flex; align-items: center; gap: 1px; padding-left: 3px; }
.dock-tools button { width: 24px; height: 24px; display: flex; align-items: center; padding: 0 4px; }
.dock-tools svg { flex: none; width: 16px; height: 16px; }
.dock-tools .menu { width: 37px; }

.tree-frame, .browser-frame {
  flex: 1;
  min-height: 0;
  display: flex;
  background: #fff;
  border: 1px solid var(--line);
  border-left: 0;
}
.tree-frame { flex-direction: column; justify-content: space-between; }
.layer-row { display: flex; align-items: center; height: 18px; padding-left: 23px; background: var(--panel); }
.layer-row svg { flex: none; width: 12px; height: 12px; margin: 0 8px 0 9px; }
.layer-row span { white-space: nowrap; font-weight: 700; text-decoration: underline; text-underline-offset: 2px; }

input[type="checkbox"] {
  appearance: none;
  flex: none;
  width: 13px;
  height: 13px;
  margin: 0;
  border: 1px solid #b8b8b8;
  background: #fff url("data:image/svg+xml,%3Csvg xmlns='http://www.w3.org/2000/svg' viewBox='0 0 11 11'%3E%3Cpath d='M2 5l2.500 4L9 1.500' fill='none' stroke='%23000' stroke-width='1.800'/%3E%3C/svg%3E") center / 11px 11px no-repeat;
}

.tri { display: block; margin: auto; width: 0; border: 4px solid transparent; }
.tri.left { border-right-color: var(--dark); border-left: 0; }
.tri.right { border-left-color: var(--dark); border-right: 0; }
.tri.up { border-bottom-color: var(--dark); border-top: 0; }
.tri.down { border-top-color: var(--dark); border-bottom: 0; }

.scroll-x { height: 14px; display: flex; border-top: 1px solid var(--line); }
.scroll-x button { width: 13px; background: #fafafa; }
.scroll-x .track { flex: 1; background: #e2e2e2; border: solid var(--line); border-width: 0 1px; }
.scroll-x .thumb { display: block; width: 58%; height: 100%; background: #fcfcfc; border-right: 1px solid var(--line); }
.scroll-y { width: 14px; display: flex; flex-direction: column; border-left: 1px solid var(--line); }
.scroll-y button { height: 13px; background: #fafafa; }
.scroll-y .track { flex: 1; background: #e2e2e2; border: solid var(--line); border-width: 1px 0; }
.scroll-y .thumb { display: block; height: 87%; background: #f8f8f8; border-bottom: 1px solid var(--line); }

.split-h { flex: none; height: 7px; display: grid; place-items: center; }
.split-h::before { content: ""; width: 16px; height: 1px; background: var(--dot) 0 0 / 3px 3px; }
.split-v { width: 6px; display: grid; place-items: center; }
.split-v::before { content: ""; width: 1px; height: 16px; background: var(--dot) 0 0 / 3px 3px; }

.tree { flex: 1; margin: 0; padding: 1px 0 0; list-style: none; overflow: hidden; }
.tree li { position: relative; display: flex; align-items: center; height: 18px; padding-left: 19px; gap: 6px; white-space: nowrap; }
.tree li.child { padding-left: 35px; }
.tree svg { width: 16px; height: 16px; }
.shut::before, .open::before { content: ""; position: absolute; left: 6px; top: 5px; border: 4px solid transparent; }
.shut::before { border-left-color: var(--dark); border-right: 0; }
.open::before { left: 4px; top: 7px; border-top-color: var(--dark); border-bottom: 0; }

.map { flex: 1; min-width: 0; background: #fff; border: 1px solid var(--line); border-right: 0; }
.map svg { display: block; width: 100%; height: 100%; }
.points { fill: #e5b636; stroke: #232323; }

.statusbar {
  flex: none;
  height: 24px;
  display: flex;
  padding: 3px 0 0 3px;
  font-size: 10px;
  line-height: 22px;
  white-space: nowrap;
  overflow: hidden;
}
.statusbar input:not([type="checkbox"]), .statusbar select, .locator {
  height: 23px;
  border: 1px solid var(--line);
  border-radius: 2px 2px 0 0;
  background: #fff;
  padding: 0 4px;
  font-size: 11px;
}
.statusbar .locator { width: 257px; margin-right: auto; display: flex; padding: 3px 8px; gap: 6px; }
.locator svg { width: 14px; height: 14px; }
.statusbar .locator input { flex: 1; height: 15px; border: 0; padding: 0; outline: 0; }
.locator input::placeholder { color: #777; }
.field { display: flex; gap: 5px; }
.statusbar .coord { width: 117px; padding: 0 6px; white-space: pre; }
.flat { height: 22px; display: flex; align-items: center; gap: 2px; }
.flat svg { width: 16px; height: 16px; }
.statusbar > .flat { margin: 0 13px 0 4px; }
.statusbar select {
  width: 81px;
  appearance: none;
  background: linear-gradient(var(--line), var(--line)) right 19px top / 1px 100% no-repeat,
    url("data:image/svg+xml,%3Csvg xmlns='http://www.w3.org/2000/svg' viewBox='0 0 8 4'%3E%3Cpath d='M0 0h8L4 4z' fill='%23555'/%3E%3C/svg%3E") right 6px top 9px / 8px 4px no-repeat,
    linear-gradient(90deg, #fff 60px, #f5f5f5 60px);
}
.statusbar > .lock { margin: 0 8px 0 11px; }
.spin { width: 84px; height: 23px; display: grid; grid-template: 9px 9px / 1fr 16px; padding-top: 1px; border: 1px solid var(--line); background: #fff; }
.statusbar .spin input { grid-row: 1 / 3; width: 100%; height: 19px; border: 0; }
.rotation { margin-left: 9px; gap: 9px; }
.render { display: flex; align-items: center; gap: 6px; height: 22px; margin-left: 7px; }
.statusbar > .crs { margin: 0 27px 0 16px; }
.statusbar > .bubble { margin: 0 -2px 0 0; }
.bubble svg { width: 18px; }
```
